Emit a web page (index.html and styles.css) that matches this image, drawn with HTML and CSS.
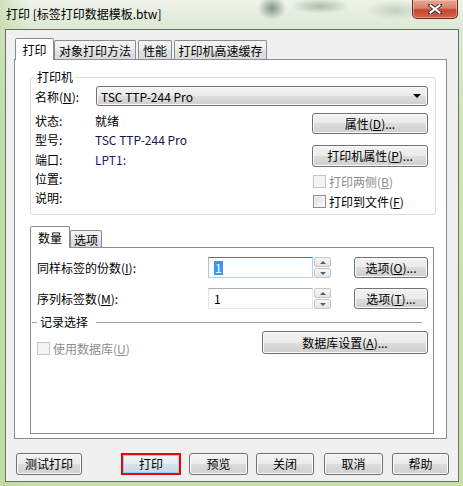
FILE: index.html
```html
<!DOCTYPE html>
<html>
<head>
<meta charset="utf-8">
<title>打印</title>
<link rel="stylesheet" href="styles.css">
</head>
<body>
<div class="window">
  <div class="titlebar">
    <div class="title">打印 [标签打印数据模板.btw]</div>
    <div class="close">
      <svg width="14" height="10" viewBox="0 0 14 10">
        <path d="M2 1 L12 9 M12 1 L2 9" stroke="#3a3a3a" stroke-width="4" stroke-linecap="round"/>
        <path d="M2.5 1.5 L11.5 8.5 M11.5 1.5 L2.5 8.5" stroke="#ffffff" stroke-width="2" stroke-linecap="square"/>
      </svg>
    </div>
  </div>
  <div class="client">
    <div class="tabctl outer">
      <div class="tabstrip">
        <div class="tab sel ot1">打印</div>
        <div class="tab ot2">对象打印方法</div>
        <div class="tab ot3">性能</div>
        <div class="tab ot4">打印机高速缓存</div>
      </div>
      <div class="panel outer-panel">
        <div class="group">
          <div class="group-title">打印机</div>
          <div class="name-row">
            <span class="name-label">名称(<u>N</u>):</span>
            <div class="combo"><span>TSC TTP-244 Pro</span><span class="arrow"></span></div>
          </div>
          <div class="group-body">
            <div class="info">
              <div class="info-row"><span class="k">状态:</span><span class="v">就绪</span></div>
              <div class="info-row"><span class="k">型号:</span><span class="v navy">TSC TTP-244 Pro</span></div>
              <div class="info-row"><span class="k">端口:</span><span class="v blue">LPT1:</span></div>
              <div class="info-row"><span class="k">位置:</span><span class="v"></span></div>
              <div class="info-row"><span class="k">说明:</span><span class="v"></span></div>
            </div>
            <div class="actions">
              <div class="btn b-prop">属性(<u>D</u>)...</div>
              <div class="btn b-pprop">打印机属性(<u>P</u>)...</div>
              <div class="check disabled c1"><span class="box"></span><span>打印两侧(<u>B</u>)</span></div>
              <div class="check c2"><span class="box"></span><span>打印到文件(<u>F</u>)</span></div>
            </div>
          </div>
        </div>

        <div class="tabctl inner">
          <div class="tabstrip inner-strip">
            <div class="tab sel it1">数量</div>
            <div class="tab it2">选项</div>
          </div>
          <div class="panel inner-panel">
            <div class="qrow r1">
              <span class="qlabel">同样标签的份数(<u>I</u>):</span>
              <div class="field focus"><span class="selected">1</span></div>
              <div class="spinner">
                <div class="sbtn"><span class="up"></span></div>
                <div class="sbtn"><span class="down"></span></div>
              </div>
              <div class="btn b-opt">选项(<u>O</u>)...</div>
            </div>
            <div class="qrow r2">
              <span class="qlabel">序列标签数(<u>M</u>):</span>
              <div class="field"><span>1</span></div>
              <div class="spinner">
                <div class="sbtn"><span class="up"></span></div>
                <div class="sbtn"><span class="down"></span></div>
              </div>
              <div class="btn b-opt">选项(<u>T</u>)...</div>
            </div>
            <div class="sep">
              <span class="dash"></span>
              <span class="sep-label">记录选择</span>
              <span class="line"></span>
            </div>
            <div class="db-row">
              <div class="check disabled c3"><span class="box"></span><span>使用数据库(<u>U</u>)</span></div>
              <div class="btn b-db">数据库设置(<u>A</u>)...</div>
            </div>
          </div>
        </div>
      </div>
    </div>

    <div class="bottom">
      <div class="btn bb1">测试打印</div>
      <div class="btn default bb2">打印</div>
      <div class="btn bb3">预览</div>
      <div class="btn bb4">关闭</div>
      <div class="btn bb5">取消</div>
      <div class="btn bb6">帮助</div>
    </div>
  </div>
</div>
</body>
</html>
```
FILE: styles.css
```css
html, body {
  margin: 0;
  padding: 0;
}
body {
  width: 463px;
  height: 486px;
  overflow: hidden;
  font-family: "Noto Sans CJK SC", "Microsoft YaHei", sans-serif;
  font-size: 12px;
  color: #000;
}
u { text-decoration: underline; }

.window {
  box-sizing: border-box;
  width: 463px;
  height: 486px;
  display: flex;
  flex-direction: column;
  padding: 0 4px 4px 5px;
  background:
    radial-gradient(ellipse 14px 12px at 272px 8px, rgba(40,70,60,0.55), rgba(40,70,60,0) 100%),
    radial-gradient(ellipse 30px 8px at 320px 6px, rgba(60,90,70,0.35), rgba(60,90,70,0) 100%),
    radial-gradient(ellipse 30px 10px at 395px 10px, rgba(90,120,90,0.25), rgba(90,120,90,0) 100%),
    linear-gradient(to right, rgba(190,215,160,0.6) 0, rgba(210,228,190,0) 30px),
    linear-gradient(to bottom, #eef3ea 0, #dfe9d6 26px, #cfe3b8 120px, #c6e0a6 100%);
}

.titlebar {
  height: 29px;
  flex: none;
  display: flex;
  justify-content: space-between;
  align-items: flex-start;
}
.title {
  padding-top: 6px;
  padding-left: 1px;
  line-height: 16px;
  font-size: 12px;
  color: #000;
}
.close {
  box-sizing: border-box;
  width: 46px;
  height: 19px;
  margin-right: 1px;
  border: 1px solid #6b2b22;
  border-top: none;
  border-radius: 0 0 5px 5px;
  background: linear-gradient(#e9a593 0%, #d9826c 45%, #c8452f 55%, #d5604a 100%);
  box-shadow: inset 0 0 0 1px rgba(255,210,200,0.5);
  display: flex;
  align-items: center;
  justify-content: center;
}

.client {
  flex: 1;
  box-sizing: border-box;
  border: 1px solid #66725f;
  background: #f0f0f0;
  display: flex;
  flex-direction: column;
}

/* tab controls */
.tabctl.outer {
  margin: 8px 0 0 8px;
  width: 433px;
}
.tabstrip {
  display: flex;
  align-items: flex-end;
  height: 21px;
  position: relative;
  z-index: 1;
}
.tab {
  box-sizing: border-box;
  height: 19px;
  border: 1px solid #898c95;
  border-bottom: none;
  border-radius: 2px 2px 0 0;
  background: linear-gradient(#f4f4f4, #ececec 50%, #e2e2e2 50%, #dadada);
  display: flex;
  align-items: center;
  justify-content: center;
  padding-top: 1px;
  line-height: 14px;
  white-space: nowrap;
}
.tab.sel {
  height: 22px;
  margin-bottom: -1px;
  background: #ffffff;
  padding-top: 0;
}
.ot1 { margin-left: 1px; width: 39px; }
.ot2 { width: 82px; }
.ot3 { margin-left: 2px; width: 34px; }
.ot4 { margin-left: 2px; width: 93px; }

.panel {
  box-sizing: border-box;
  border: 1px solid #898c95;
  background: #ffffff;
}
.outer-panel {
  height: 380px;
  padding-top: 17px;
  padding-left: 15px;
}

/* group box */
.group {
  box-sizing: border-box;
  width: 406px;
  height: 138px;
  border: 1px solid #d5dfe5;
  border-radius: 3px;
  padding: 0 7px 0 4px;
}
.group-title {
  width: fit-content;
  margin-top: -9px;
  margin-left: 0;
  padding: 0 2px;
  line-height: 16px;
  height: 16px;
  background: #ffffff;
}
.name-row {
  margin-top: 1px;
  height: 20px;
  display: flex;
  align-items: center;
}
.name-label {
  width: 61px;
  flex: none;
}
.combo {
  box-sizing: border-box;
  width: 333px;
  height: 20px;
  border: 1px solid #707070;
  border-radius: 3px;
  background: linear-gradient(#f2f2f2 0%, #ebebeb 50%, #dddddd 50%, #cfcfcf 100%);
  box-shadow: inset 0 0 0 1px #fafafa;
  display: flex;
  align-items: center;
  justify-content: space-between;
  padding: 0 6px 0 4px;
  font-size: 12px;
}
.arrow {
  width: 0;
  height: 0;
  border-left: 4px solid transparent;
  border-right: 4px solid transparent;
  border-top: 4px solid #000;
}

.group-body {
  display: flex;
  justify-content: space-between;
}
.info {
  padding-top: 5px;
}
.info-row {
  height: 19.3px;
  display: flex;
  align-items: center;
}
.k { width: 60px; }
.v { font-size: 12px; }
.navy { color: #141450; }
.blue { color: #1a1a7a; }

.actions {
  width: 116px;
  padding-top: 7px;
  display: flex;
  flex-direction: column;
}

/* buttons */
.btn {
  box-sizing: border-box;
  border: 1px solid #707070;
  border-radius: 3px;
  background: linear-gradient(#f2f2f2 0%, #ebebeb 50%, #dddddd 50%, #cfcfcf 100%);
  box-shadow: inset 0 0 0 1px #fcfcfc;
  display: flex;
  align-items: center;
  justify-content: center;
  line-height: 14px;
  white-space: nowrap;
}
.b-prop { height: 21px; }
.b-pprop { height: 22px; margin-top: 11px; }

/* checkboxes */
.check {
  height: 20px;
  display: flex;
  align-items: center;
  white-space: nowrap;
}
.check .box {
  box-sizing: border-box;
  width: 13px;
  height: 13px;
  margin-right: 3px;
  border: 1px solid #8f8f8f;
  background: linear-gradient(135deg, #dcdcdc, #fdfdfd);
  box-shadow: inset 0 0 0 1px #f4f4f4;
  flex: none;
}
.check.disabled { color: #8d8d8d; }
.check.disabled .box {
  border-color: #c4c4c4;
  background: #f4f4f4;
  box-shadow: none;
}
.c1 { margin-top: 4px; margin-left: 1px; }
.c2 { margin-left: 1px; }

/* inner tab control */
.tabctl.inner {
  margin-top: 12px;
  width: 404px;
}
.inner-strip { height: 20px; }
.it1 { width: 40px; height: 21px; }
.it2 { width: 32px; height: 17px; }
.inner-panel {
  height: 187px;
  padding-top: 9px;
}

.qrow {
  height: 21px;
  display: flex;
  align-items: center;
}
.r2 { margin-top: 10px; }
.qlabel {
  width: 171px;
  padding-left: 6px;
  flex: none;
}
.field {
  box-sizing: border-box;
  width: 105px;
  height: 21px;
  border: 1px solid;
  border-color: #abadb3 #e3e9ef #e3e9ef #e2e3ea;
  background: #fff;
  display: flex;
  align-items: center;
  padding-left: 5px;
}
.field.focus {
  border-color: #3d7bad #b5cfe7 #b5cfe7 #a4c9e3;
}
.selected {
  background: #3399ff;
  color: #fff;
  line-height: 14px;
  padding: 0 1px;
}
.spinner {
  width: 17px;
  margin-left: 1px;
  height: 21px;
  display: flex;
  flex-direction: column;
  justify-content: space-between;
}
.sbtn {
  box-sizing: border-box;
  height: 10px;
  border: 1px solid #c6c6c6;
  border-radius: 2px;
  background: linear-gradient(#f7f7f7, #e4e4e4);
  display: flex;
  align-items: center;
  justify-content: center;
}
.up, .down {
  width: 0;
  height: 0;
  border-left: 3px solid transparent;
  border-right: 3px solid transparent;
}
.up { border-bottom: 3px solid #4c607a; }
.down { border-top: 3px solid #4c607a; }
.b-opt {
  margin-left: 23px;
  width: 74px;
  height: 21px;
}

.sep {
  margin-top: 6px;
  height: 14px;
  display: flex;
  align-items: center;
  padding-left: 1px;
  margin-right: 11px;
}
.dash {
  width: 5px;
  height: 1px;
  background: #a0a0a0;
}
.sep-label {
  margin: 0 8px 0 3px;
  line-height: 14px;
}
.line {
  flex: 1;
  height: 1px;
  background: #a0a0a0;
}

.db-row {
  margin-top: 2px;
  display: flex;
  align-items: flex-start;
  justify-content: space-between;
  padding-right: 5px;
}
.c3 {
  margin-top: 7px;
  margin-left: 6px;
}
.b-db {
  width: 166px;
  height: 23px;
}

/* bottom buttons */
.bottom {
  margin-top: 14px;
  padding-left: 10px;
  display: flex;
  height: 22px;
}
.bottom .btn { height: 22px; }
.bb1 { width: 66px; }
.bb2 { width: 60px; margin-left: 39px; }
.bb3 { width: 59px; margin-left: 8px; }
.bb4 { width: 58px; margin-left: 8px; }
.bb5 { width: 59px; margin-left: 10px; }
.bb6 { width: 57px; margin-left: 9px; }
.btn.default {
  border: 2px solid #ee0000;
  border-radius: 0;
  background: linear-gradient(#eef5fa 0%, #e2edf4 50%, #d3e3ed 50%, #c8dbe7 100%);
  box-shadow: inset 0 0 0 1px #8ad8f4;
}
```
